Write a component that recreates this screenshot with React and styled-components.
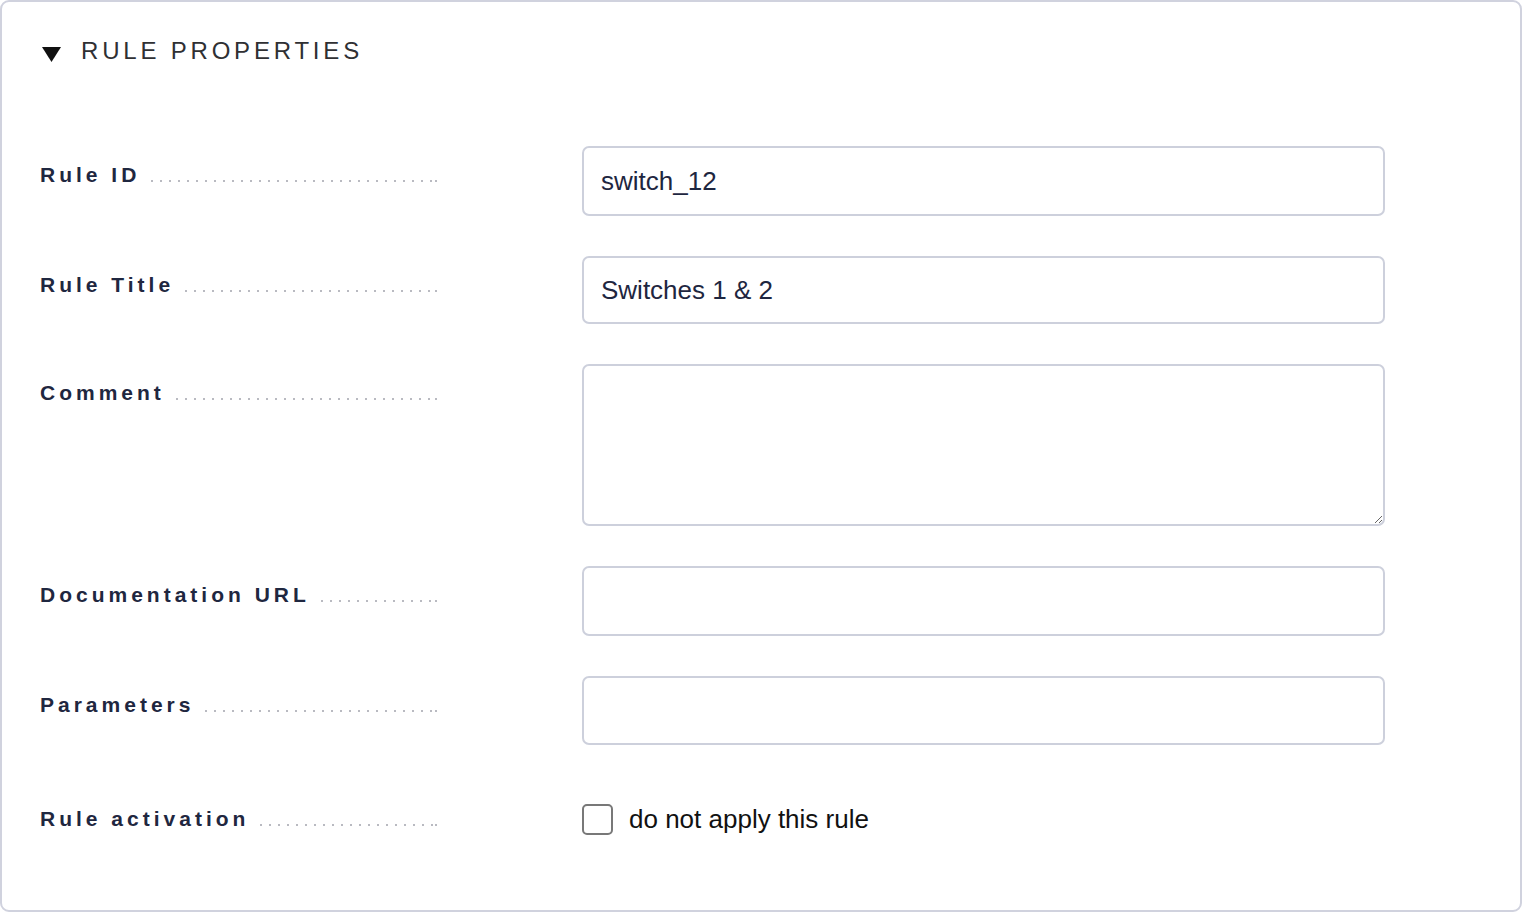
import React from "react";
import styled, { createGlobalStyle } from "styled-components";

const Global = createGlobalStyle`
  html, body { margin: 0; padding: 0; background: #ffffff; }
  body { font-family: "Liberation Sans", Arial, Helvetica, sans-serif; }
  * { box-sizing: border-box; }
`;

const Panel = styled.section`
  width: 1522px;
  height: 912px;
  border: 2px solid #d0d2de;
  border-radius: 9px;
  padding: 34px 0 0 38px;
  background: #fff;
`;

const Header = styled.div`
  display: flex;
  align-items: flex-start;
  gap: 20px;
  padding-left: 2px;
  height: 30px;
`;

const Caret = styled.svg`
  width: 19px;
  height: 15px;
  margin-top: 11px;
  flex: none;
`;

const Title = styled.h2`
  margin: 0;
  font-size: 24px;
  line-height: 30px;
  font-weight: 400;
  letter-spacing: 3.8px;
  color: #2f3033;
`;

const Form = styled.div`
  display: grid;
  grid-template-columns: 397px 803px;
  column-gap: 145px;
  row-gap: 40px;
  margin-top: 80px;
`;

const LabelCell = styled.div`
  display: flex;
  align-items: baseline;
  padding-top: ${(p) => 14 + (p.$shift || 0)}px;
  line-height: 30px;
`;

const LabelText = styled.span`
  font-size: 21px;
  font-weight: 700;
  letter-spacing: 4px;
  color: #1f2740;
  white-space: nowrap;
`;

const Leader = styled.span`
  position: relative;
  flex: 1;
  height: 2px;
  margin-left: 11px;
  margin-right: 3px;
  background-image: linear-gradient(to right, #b9bac1 2px, transparent 2px);
  background-size: 9px 2px;
  background-position: left bottom;
  background-repeat: repeat-x;
  display: inline-block;

  &::after {
    content: "";
    position: absolute;
    right: -3px;
    bottom: 0;
    width: 2px;
    height: 2px;
    background: #b9bac1;
  }
`;

const TextInput = styled.input`
  width: 803px;
  height: ${(p) => p.$h || 70}px;
  margin: 0;
  border: 2px solid #cdd0dc;
  border-radius: 7px;
  padding: 0 17px;
  font-family: "Liberation Sans", Arial, Helvetica, sans-serif;
  font-size: 26px;
  color: #1e2640;
  background: #fff;
  outline: none;
`;

const TextArea = styled.textarea`
  display: block;
  width: 803px;
  height: 162px;
  margin: 0;
  border: 2px solid #cdd0dc;
  border-radius: 7px;
  padding: 14px 17px;
  font-family: "Liberation Sans", Arial, Helvetica, sans-serif;
  font-size: 26px;
  color: #1e2640;
  background: #fff;
  outline: none;
  resize: vertical;
`;

const CheckRow = styled.label`
  display: flex;
  align-items: center;
  gap: 16px;
  height: 58px;
  margin-top: 5px;
  font-size: 26px;
  color: #111;
  cursor: pointer;
`;

const Check = styled.input`
  appearance: none;
  -webkit-appearance: none;
  width: 31px;
  height: 31px;
  margin: 0;
  border: 2px solid #787878;
  border-radius: 5px;
  background: #fff;
  flex: none;
`;

const fields = [
  { label: "Rule ID", value: "switch_12", h: 70 },
  { label: "Rule Title", value: "Switches 1 & 2", h: 68 },
  { label: "Comment", area: true },
  { label: "Documentation URL", value: "", h: 70 },
  { label: "Parameters", value: "", h: 69 },
];

export default function App() {
  return (
    <>
      <Global />
      <Panel>
        <Header>
          <Caret viewBox="0 0 19 15">
            <polygon points="0,0 19,0 9.5,15" fill="#111" />
          </Caret>
          <Title>RULE PROPERTIES</Title>
        </Header>
        <Form>
          {fields.map((f) => (
            <React.Fragment key={f.label}>
              <LabelCell>
                <LabelText>{f.label}</LabelText>
                <Leader />
              </LabelCell>
              {f.area ? (
                <TextArea defaultValue="" />
              ) : (
                <TextInput type="text" defaultValue={f.value} $h={f.h} />
              )}
            </React.Fragment>
          ))}
          <LabelCell $shift={5}>
            <LabelText>Rule activation</LabelText>
            <Leader />
          </LabelCell>
          <CheckRow>
            <Check type="checkbox" />
            <span>do not apply this rule</span>
          </CheckRow>
        </Form>
      </Panel>
    </>
  );
}
